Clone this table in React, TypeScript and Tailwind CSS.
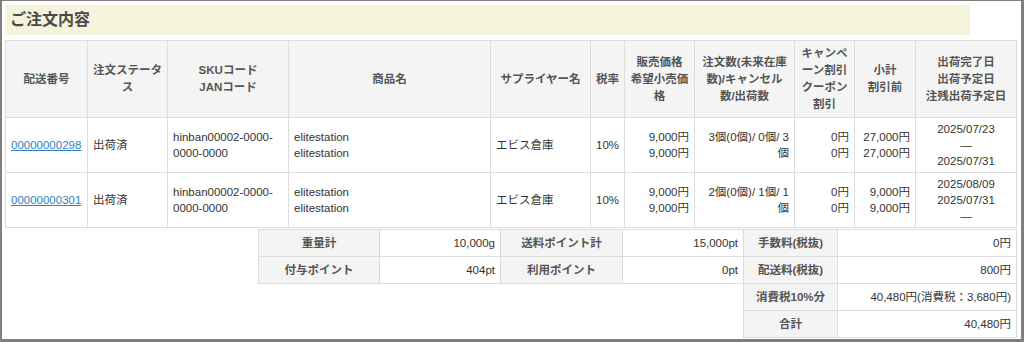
const FONT = "font-['Liberation_Sans','Noto_Sans_CJK_JP',sans-serif]";

const COLS = [82, 80, 121, 202, 100, 34, 70, 100, 60, 61, 101];

const HEADERS: string[][] = [
  ["配送番号"],
  ["注文ステータス"],
  ["SKUコード", "JANコード"],
  ["商品名"],
  ["サプライヤー名"],
  ["税率"],
  ["販売価格", "希望小売価格"],
  ["注文数(未来在庫", "数)/キャンセル", "数/出荷数"],
  ["キャンペーン割引", "クーポン割引"],
  ["小計", "割引前"],
  ["出荷完了日", "出荷予定日", "注残出荷予定日"],
];

type Row = {
  id: string;
  qty: string;
  subtotal: string;
  dates: string[];
};

const ROWS: Row[] = [
  {
    id: "00000000298",
    qty: "3個(0個)/ 0個/ 3 個",
    subtotal: "27,000円",
    dates: ["2025/07/23", "—", "2025/07/31"],
  },
  {
    id: "00000000301",
    qty: "2個(0個)/ 1個/ 1 個",
    subtotal: "9,000円",
    dates: ["2025/08/09", "2025/07/31", "—"],
  },
];

const th =
  "border border-[#dcdcdc] bg-[#f4f4f4] px-[4px] py-[4px] text-center align-middle font-bold text-[#555] leading-[17px]";
const td = "border border-[#dcdcdc] px-[5px] py-[3px] align-middle text-[#333] leading-[16px]";

const lbl =
  "border border-[#dcdcdc] bg-[#f4f4f4] px-[5px] py-[5px] text-center font-bold text-[#555] leading-[16px]";
const val = "border border-[#dcdcdc] px-[5px] py-[5px] text-right text-[#333] leading-[16px]";

export default function App() {
  return (
    <div
      className={`${FONT} box-border h-[342px] w-[1024px] border-t border-l-2 border-r-[3px] border-b-[3px] border-[#7f7f7f] bg-white pt-[4px] pl-[3px] text-[11.5px]`}
    >
      <div className="flex h-[30px] w-[965px] items-center bg-[#f5f3dc] pl-[5px]">
        <h2 className="text-[16px] font-bold text-[#4a4a4a]">ご注文内容</h2>
      </div>

      <table className="mt-[5px] w-[1011px] table-fixed border-collapse">
        <colgroup>
          {COLS.map((w, i) => (
            <col key={i} style={{ width: w }} />
          ))}
        </colgroup>
        <thead>
          <tr className="h-[76px]">
            {HEADERS.map((lines, i) => (
              <th key={i} className={th}>
                {lines.map((l, j) => (
                  <div key={j}>{l}</div>
                ))}
              </th>
            ))}
          </tr>
        </thead>
        <tbody>
          {ROWS.map((r) => (
            <tr key={r.id} className="h-[55px]">
              <td className={td}>
                <a href="#" className="text-[#2f80c2] underline">
                  {r.id}
                </a>
              </td>
              <td className={td}>出荷済</td>
              <td className={td}>hinban00002-0000-0000-0000</td>
              <td className={td}>
                <div>elitestation</div>
                <div>elitestation</div>
              </td>
              <td className={td}>エビス倉庫</td>
              <td className={td}>10%</td>
              <td className={`${td} text-right`}>
                <div>9,000円</div>
                <div>9,000円</div>
              </td>
              <td className={`${td} text-right`}>{r.qty}</td>
              <td className={`${td} text-right`}>
                <div>0円</div>
                <div>0円</div>
              </td>
              <td className={`${td} text-right`}>
                <div>{r.subtotal}</div>
                <div>{r.subtotal}</div>
              </td>
              <td className={`${td} text-center`}>
                {r.dates.map((d, i) => (
                  <div key={i}>{d}</div>
                ))}
              </td>
            </tr>
          ))}
        </tbody>
      </table>

      <table className="mt-px ml-[253px] w-[758px] table-fixed border-collapse">
        <colgroup>
          <col className="w-[121px]" />
          <col className="w-[121px]" />
          <col className="w-[122px]" />
          <col className="w-[121px]" />
          <col className="w-[94px]" />
          <col className="w-[179px]" />
        </colgroup>
        <tbody>
          <tr>
            <td className={lbl}>重量計</td>
            <td className={val}>10,000g</td>
            <td className={lbl}>送料ポイント計</td>
            <td className={val}>15,000pt</td>
            <td className={lbl}>手数料(税抜)</td>
            <td className={val}>0円</td>
          </tr>
          <tr>
            <td className={lbl}>付与ポイント</td>
            <td className={val}>404pt</td>
            <td className={lbl}>利用ポイント</td>
            <td className={val}>0pt</td>
            <td className={lbl}>配送料(税抜)</td>
            <td className={val}>800円</td>
          </tr>
          <tr>
            <td colSpan={4} className="border-0" />
            <td className={lbl}>消費税10%分</td>
            <td className={val}>40,480円(消費税：3,680円)</td>
          </tr>
          <tr>
            <td colSpan={4} className="border-0" />
            <td className={lbl}>合計</td>
            <td className={val}>40,480円</td>
          </tr>
        </tbody>
      </table>
    </div>
  );
}
